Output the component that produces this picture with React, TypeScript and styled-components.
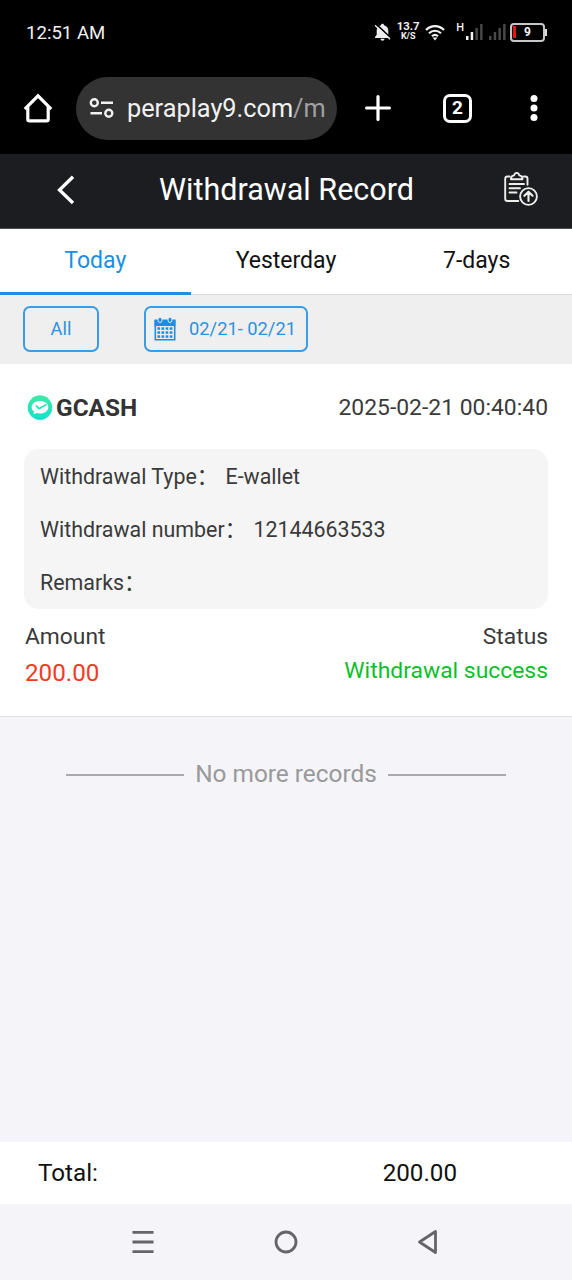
import React from 'react';
import styled, { createGlobalStyle } from 'styled-components';

const GlobalStyle = createGlobalStyle`
  * { box-sizing: border-box; }
  body {
    margin: 0;
    background: #f4f4f9;
    font-family: Roboto, "Noto Sans CJK SC", sans-serif;
  }
  svg { display: block; flex: none; }
`;

const Screen = styled.div`
  width: 572px;
  height: 1280px;
  display: flex;
  flex-direction: column;
  overflow: hidden;
  background: #f4f4f9;
`;

const StatusBar = styled.div`
  height: 64px;
  padding: 0 25px 0 26px;
  display: flex;
  align-items: center;
  justify-content: space-between;
  background: #000;
  color: #f2f2f2;
`;

const Clock = styled.span`
  padding-top: 1px;
  font-size: 18.6px;
  line-height: 22px;
`;

const StatusIcons = styled.div`
  display: flex;
  align-items: center;
`;

const NetSpeed = styled.div`
  width: 24px;
  margin: -2px 5px 0 5px;
  display: flex;
  flex-direction: column;
  align-items: center;
  font-weight: 700;
`;

const SpeedValue = styled.span`
  font-size: 11.4px;
  line-height: 11px;
`;

const SpeedUnit = styled.span`
  font-size: 9px;
  line-height: 9px;
`;

const NetworkType = styled.span`
  margin: -8px 1px 0 11px;
  font-size: 11px;
  line-height: 12px;
  font-weight: 500;
`;

const SignalGroup = styled.div`
  display: flex;
  gap: 5px;
`;

const Battery = styled.div`
  width: 35px;
  height: 19px;
  margin-left: 4px;
  padding: 1px;
  display: flex;
  align-items: center;
  border: 2px solid #c8c8c8;
  border-radius: 4px;
`;

const BatteryFill = styled.div`
  width: 3px;
  height: 12px;
  background: #e81414;
`;

const BatteryLevel = styled.span`
  flex: 1;
  padding-right: 3px;
  text-align: center;
  font-size: 12px;
  line-height: 14px;
  font-weight: 700;
`;

const BatteryTip = styled.div`
  width: 2px;
  height: 7px;
  background: #ddd;
`;

const BrowserBar = styled.div`
  height: 90px;
  padding: 12px 23px 14px;
  display: flex;
  align-items: center;
  background: #000;
`;

const AddressField = styled.div`
  width: 261px;
  height: 63px;
  margin-left: 23px;
  margin-right: 28px;
  padding-left: 13px;
  display: flex;
  align-items: center;
  border-radius: 32px;
  background: #333;
`;

const Address = styled.div`
  margin-left: 13px;
  padding-top: 2px;
  white-space: nowrap;
  color: #f1f1f1;
  font-size: 25.3px;
  line-height: 34px;
`;

const AddressPath = styled.span`
  color: #a0a0a0;
`;

const TabCount = styled.div`
  width: 29px;
  height: 29px;
  margin: 0 58px 0 52px;
  display: flex;
  align-items: center;
  justify-content: center;
  border: 3px solid #fff;
  border-radius: 7px;
  color: #fff;
  font-size: 19px;
  line-height: 20px;
  font-weight: 700;
`;

const PageHeader = styled.header`
  height: 75px;
  padding: 0 33px 3px 56px;
  display: flex;
  align-items: center;
  justify-content: space-between;
  background: #1c1d21;
  border-bottom: 1px solid #4b4c4f;
  color: #fff;
`;

const Title = styled.h1`
  margin: 0 6px 0 0;
  font-size: 30.5px;
  line-height: 36px;
  font-weight: 400;
`;

const Tabs = styled.nav`
  height: 66px;
  display: grid;
  grid-template-columns: repeat(3, 1fr);
  background: #fff;
`;

const Tab = styled.div<{ $active?: boolean }>`
  padding-bottom: ${({ $active }) => ($active ? 0 : 2)}px;
  display: flex;
  align-items: center;
  justify-content: center;
  border-bottom: ${({ $active }) => ($active ? '3px solid #1a8fe3' : '1px solid #dcdcdc')};
  color: ${({ $active }) => ($active ? '#1a8fe3' : '#111')};
  font-size: 23px;
  line-height: 28px;
`;

const Filters = styled.div`
  height: 69px;
  padding: 11px 23px 12px;
  display: flex;
  gap: 45px;
  background: #efefef;
`;

const FilterButton = styled.div<{ $width: number }>`
  width: ${({ $width }) => $width}px;
  height: 46px;
  display: flex;
  align-items: center;
  justify-content: center;
  gap: 13px;
  border: 2px solid #3a9ce5;
  border-radius: 7px;
  color: #2b92e0;
  font-size: 18.3px;
  line-height: 22px;
`;

const DateRange = styled.span`
  padding: 0 2px 1px 0;
`;

const RecordCard = styled.section`
  height: 353px;
  padding: 29px 24px 0 25px;
  background: #fff;
  border-bottom: 1px solid #e2e2e4;
  color: #3a3a3a;
`;

const RecordTop = styled.div`
  height: 30px;
  padding-left: 2px;
  display: flex;
  align-items: center;
  justify-content: space-between;
`;

const Wallet = styled.div`
  display: flex;
  align-items: center;
  gap: 3px;
  color: #333;
  font-size: 24.4px;
  line-height: 28px;
  font-weight: 700;
`;

const Timestamp = styled.span`
  padding-bottom: 1px;
  font-size: 22.9px;
  line-height: 28px;
`;

const Details = styled.div`
  height: 160px;
  margin: 26px 0 0 -1px;
  padding: 1px 0 0 16px;
  display: grid;
  grid-template-rows: repeat(3, 53px);
  align-items: center;
  border-radius: 15px;
  background: #f5f5f5;
`;

const DetailLine = styled.div`
  white-space: pre;
  font-size: 21.4px;
  line-height: 30px;
`;

const DetailValue = styled.span`
  margin-left: 2px;
`;

const Summary = styled.div`
  margin-top: 14px;
  display: flex;
  justify-content: space-between;
`;

const SummaryColumn = styled.div<{ $end?: boolean }>`
  display: flex;
  flex-direction: column;
  gap: ${({ $end }) => ($end ? 6 : 8)}px;
  align-items: ${({ $end }) => ($end ? 'flex-end' : 'flex-start')};
  font-size: 22.8px;
  line-height: 28px;
`;

const Amount = styled.span`
  color: #f03c24;
  font-size: 24.2px;
`;

const Success = styled.span`
  color: #0dc02b;
  font-size: 22.9px;
`;

const ListEnd = styled.div`
  flex: 1;
  padding: 42px 66px 0;
  display: flex;
  align-items: flex-start;
  justify-content: space-between;
  color: #999;
  font-size: 24.4px;
  line-height: 30px;
`;

const Rule = styled.div`
  width: 118px;
  height: 2px;
  margin-top: 15px;
  background: #a9a9ac;
`;

const TotalBar = styled.footer`
  height: 62px;
  padding: 0 115px 0 38px;
  display: flex;
  align-items: center;
  justify-content: space-between;
  background: #fff;
  color: #111;
  font-size: 24.2px;
  line-height: 30px;
`;

const SystemNav = styled.div`
  height: 76px;
  padding: 0 133px 0 132px;
  display: flex;
  align-items: center;
  justify-content: space-between;
  background: #f4f4f9;
`;

const BellOffIcon = () => (
  <svg width="17" height="20" viewBox="0 0 17 20">
    <path d="M8.5 1.800c.9 0 1.500.6 1.500 1.400 2.800.7 4.300 2.700 4.300 5.400v4.200l1.700 2.200v1H1v-1l1.700-2.200V8.600c0-2.700 1.500-4.700 4.300-5.400 0-.8.6-1.400 1.500-1.400zM6.400 16.700h4.200c-.2 1.300-.9 2-2.100 2s-1.900-.7-2.100-2z" fill="#eee" />
    <path d="M2.200 2.200l14.500 13.500" stroke="#000" strokeWidth="1.600" />
    <path d="M1 3.200l15 14" stroke="#eee" strokeWidth="1.300" />
  </svg>
);

const WifiIcon = () => (
  <svg width="20" height="17" viewBox="0 0 20 17" fill="none" stroke="#f2f2f2" strokeWidth="2.200">
    <path d="M1 6C6.200.9 13.800.9 19 6M4 9.200c3.500-3.300 8.500-3.300 12 0M7 12.300c1.800-1.600 4.200-1.600 6 0" />
    <path d="M7.500 13.500h5L10 16.500z" fill="#f2f2f2" stroke="none" />
  </svg>
);

const SignalIcon = ({ active }: { active: number }) => (
  <svg width="18" height="18" viewBox="0 0 18 18">
    {[0, 1, 2, 3].map((i) => (
      <rect key={i} x={1 + i * 4.700} y={13 - i * 4} width="2.500" height={4 + i * 4} fill={i < active ? '#f2f2f2' : '#484848'} />
    ))}
  </svg>
);

const HomeIcon = () => (
  <svg width="30" height="32" viewBox="0 0 30 32" fill="none" stroke="#fff" strokeWidth="3.200">
    <path d="M1.800 17.200L15 3.800l13.200 13.400" strokeLinejoin="miter" />
    <path d="M4.800 15v12.200c0 1.100.5 1.600 1.600 1.600h17.200c1.100 0 1.600-.5 1.600-1.600V15" />
  </svg>
);

const SiteSettingsIcon = () => (
  <svg width="25" height="22" viewBox="0 0 25 22" fill="none" stroke="#f1f1f1" strokeWidth="2.400">
    <circle cx="5.300" cy="5.800" r="3.500" />
    <path d="M12 5.800h12M1.500 16.200h11.500" />
    <circle cx="19.800" cy="16.200" r="3.500" />
  </svg>
);

const PlusIcon = () => (
  <svg width="26" height="26" viewBox="0 0 26 26" fill="none" stroke="#fff" strokeWidth="3.200">
    <path d="M13 1.600v22.800M1.600 13h22.800" strokeLinecap="round" />
  </svg>
);

const MoreIcon = () => (
  <svg width="8" height="28" viewBox="0 0 8 28" fill="#fff">
    <circle cx="4" cy="4.500" r="3.500" />
    <circle cx="4" cy="14" r="3.500" />
    <circle cx="4" cy="23.500" r="3.500" />
  </svg>
);

const BackIcon = () => (
  <svg width="20" height="30" viewBox="0 0 20 30" fill="none" stroke="#fff" strokeWidth="3.300">
    <path d="M17 1.800L3.500 15 17 28" />
  </svg>
);

const ClipboardIcon = () => (
  <svg width="36" height="36" viewBox="0 0 36 36" fill="none" stroke="#eee" strokeWidth="1.900" strokeLinecap="round" strokeLinejoin="round">
    <path d="M6.500 4.500H4.500C3 4.500 2.200 5.300 2.200 6.800v19.900c0 1.500.8 2.300 2.300 2.300h10.800M20.500 4.500h1.700c1.500 0 2.300.8 2.300 2.300v6" />
    <path d="M8 7.300h11.400c.3-2.600-.8-3.600-3.100-3.900C15.900 1.500 15.100.9 13.700.9s-2.200.6-2.600 2.500C8.800 3.700 7.700 4.700 8 7.300z" />
    <path d="M6.500 12h14.500M6.500 16.300h10.500M6.500 20.500h7" />
    <circle cx="25.500" cy="24.500" r="8.400" />
    <path d="M25.500 29v-8.500M21.400 23.800l4.100-4.100 4.100 4.100" strokeWidth="2.100" />
  </svg>
);

const CalendarIcon = () => (
  <svg width="22" height="24" viewBox="0 0 22 24">
    <path d="M1.300 3.500h19.400v19.200H1.300z" fill="none" stroke="#1a8fe3" strokeWidth="1.600" />
    <path d="M.5 2.700h21v6.300h-21z" fill="#1a8fe3" />
    {[6, 16].map((x) => (
      <rect key={x} x={x - 1.900} y="0.300" width="3.800" height="5.200" rx="1.900" fill="#1a8fe3" stroke="#efefef" strokeWidth=".9" />
    ))}
    {[10.800, 14.800, 18.800].map((y) =>
      [3.400, 7.500, 11.600, 15.700].map((x) => (
        <rect key={`${x}-${y}`} x={x} y={y - 0.500} width="2.700" height="2.500" fill="#1a8fe3" />
      ))
    )}
  </svg>
);

const WalletLogo = () => (
  <svg width="26" height="26" viewBox="0 0 26 26">
    <defs>
      <linearGradient id="wallet" x1="0" y1="0" x2="0" y2="1">
        <stop offset="0" stopColor="#3ceba5" />
        <stop offset="1" stopColor="#16e0cb" />
      </linearGradient>
    </defs>
    <circle cx="13" cy="12.600" r="12.300" fill="url(#wallet)" />
    <path d="M13 6c4.900 0 8.300 2.500 8.300 6.200s-3.500 6.300-8.300 6.300c-1.100 0-2-.1-2.900-.4l-3.800 1 .9-2.500C5.500 15.500 4.700 14 4.700 12.200c0-3.700 3.400-6.200 8.300-6.200z" fill="#fff" />
    <path d="M9 10.600l2.500 2.600c.4.300.7.300 1.200.1L19.500 9.500" fill="none" stroke="#26e5b8" strokeWidth="1.700" />
  </svg>
);

const RecentsIcon = () => (
  <svg width="22" height="24" viewBox="0 0 22 24" stroke="#646469" strokeWidth="2.800">
    <path d="M.5 2.300h21M.5 12h21M.5 21.700h21" />
  </svg>
);

const CircleIcon = () => (
  <svg width="24" height="24" viewBox="0 0 24 24" fill="none" stroke="#646469" strokeWidth="2.800">
    <circle cx="12" cy="12" r="10" />
  </svg>
);

const TriangleIcon = () => (
  <svg width="22" height="26" viewBox="0 0 22 26" fill="none" stroke="#646469" strokeWidth="2.800" strokeLinejoin="round">
    <path d="M18.500 2.500v21L2.500 13z" />
  </svg>
);

export default function App() {
  return (
    <Screen>
      <GlobalStyle />
      <StatusBar>
        <Clock>12:51 AM</Clock>
        <StatusIcons>
          <BellOffIcon />
          <NetSpeed>
            <SpeedValue>13.7</SpeedValue>
            <SpeedUnit>K/S</SpeedUnit>
          </NetSpeed>
          <WifiIcon />
          <NetworkType>H</NetworkType>
          <SignalGroup>
            <SignalIcon active={2} />
            <SignalIcon active={0} />
          </SignalGroup>
          <Battery>
            <BatteryFill />
            <BatteryLevel>9</BatteryLevel>
          </Battery>
          <BatteryTip />
        </StatusIcons>
      </StatusBar>
      <BrowserBar>
        <HomeIcon />
        <AddressField>
          <SiteSettingsIcon />
          <Address>
            peraplay9.com<AddressPath>/m</AddressPath>
          </Address>
        </AddressField>
        <PlusIcon />
        <TabCount>2</TabCount>
        <MoreIcon />
      </BrowserBar>
      <PageHeader>
        <BackIcon />
        <Title>Withdrawal Record</Title>
        <ClipboardIcon />
      </PageHeader>
      <Tabs>
        <Tab $active>Today</Tab>
        <Tab>Yesterday</Tab>
        <Tab>7-days</Tab>
      </Tabs>
      <Filters>
        <FilterButton $width={76}>All</FilterButton>
        <FilterButton $width={164}>
          <CalendarIcon />
          <DateRange>02/21- 02/21</DateRange>
        </FilterButton>
      </Filters>
      <RecordCard>
        <RecordTop>
          <Wallet>
            <WalletLogo />
            GCASH
          </Wallet>
          <Timestamp>2025-02-21 00:40:40</Timestamp>
        </RecordTop>
        <Details>
          <DetailLine>Withdrawal Type： <DetailValue>E-wallet</DetailValue></DetailLine>
          <DetailLine>Withdrawal number： <DetailValue>12144663533</DetailValue></DetailLine>
          <DetailLine>Remarks：</DetailLine>
        </Details>
        <Summary>
          <SummaryColumn>
            <span>Amount</span>
            <Amount>200.00</Amount>
          </SummaryColumn>
          <SummaryColumn $end>
            <span>Status</span>
            <Success>Withdrawal success</Success>
          </SummaryColumn>
        </Summary>
      </RecordCard>
      <ListEnd>
        <Rule />
        <span>No more records</span>
        <Rule />
      </ListEnd>
      <TotalBar>
        <span>Total:</span>
        <span>200.00</span>
      </TotalBar>
      <SystemNav>
        <RecentsIcon />
        <CircleIcon />
        <TriangleIcon />
      </SystemNav>
    </Screen>
  );
}
